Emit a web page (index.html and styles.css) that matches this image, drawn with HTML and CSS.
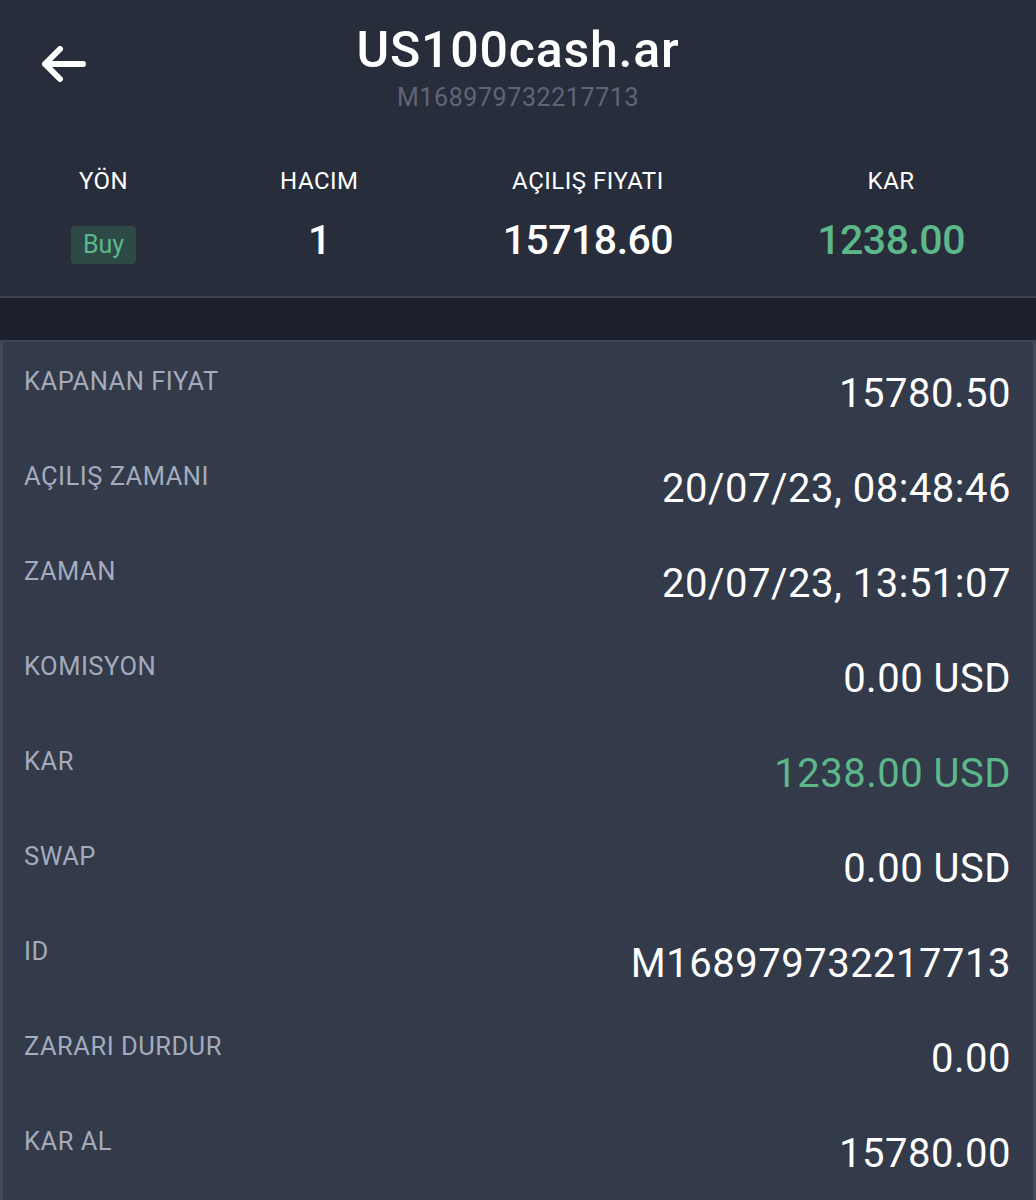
FILE: index.html
```html
<!DOCTYPE html>
<html lang="tr">
<head>
<meta charset="utf-8">
<link rel="stylesheet" href="styles.css">
</head>
<body>
<div class="app">
  <header class="header">
    <div class="topbar">
      <button class="back" aria-label="Geri">
        <svg width="48" height="40" viewBox="0 0 48 40"><path d="M5 18 H43 M20 3 L5 18 L20 33" fill="none" stroke="#ffffff" stroke-width="6" stroke-linecap="round" stroke-linejoin="round"/></svg>
      </button>
      <div class="titles">
        <div class="title">US100cash.ar</div>
        <div class="subtitle">M168979732217713</div>
      </div>
    </div>
    <div class="stats">
      <div class="stat">
        <div class="stat-label">YÖN</div>
        <div class="badge">Buy</div>
      </div>
      <div class="stat">
        <div class="stat-label">HACIM</div>
        <div class="stat-value">1</div>
      </div>
      <div class="stat">
        <div class="stat-label">AÇILIŞ FIYATI</div>
        <div class="stat-value">15718.60</div>
      </div>
      <div class="stat">
        <div class="stat-label">KAR</div>
        <div class="stat-value green">1238.00</div>
      </div>
    </div>
  </header>
  <div class="band"></div>
  <section class="panel">
    <div class="row"><div class="label">KAPANAN FIYAT</div><div class="value">15780.50</div></div>
    <div class="row"><div class="label">AÇILIŞ ZAMANI</div><div class="value">20/07/23, 08:48:46</div></div>
    <div class="row"><div class="label">ZAMAN</div><div class="value">20/07/23, 13:51:07</div></div>
    <div class="row"><div class="label">KOMISYON</div><div class="value">0.00 USD</div></div>
    <div class="row"><div class="label">KAR</div><div class="value green">1238.00 USD</div></div>
    <div class="row"><div class="label">SWAP</div><div class="value">0.00 USD</div></div>
    <div class="row"><div class="label">ID</div><div class="value">M168979732217713</div></div>
    <div class="row"><div class="label">ZARARI DURDUR</div><div class="value">0.00</div></div>
    <div class="row"><div class="label">KAR AL</div><div class="value">15780.00</div></div>
  </section>
</div>
</body>
</html>
```
FILE: styles.css
```css
* { box-sizing: border-box; }
html, body { margin: 0; padding: 0; }
body {
  background: #333a4a;
  font-family: Roboto, "Noto Sans", "DejaVu Sans", sans-serif;
  color: #ffffff;
  width: 1036px;
  height: 1200px;
  overflow: hidden;
}
.app { display: flex; flex-direction: column; height: 1200px; }

.header {
  background: #282d3b;
  height: 298px;
  border-bottom: 2px solid #3c4250;
  display: flex;
  flex-direction: column;
}
.topbar {
  position: relative;
  height: 140px;
  display: flex;
  justify-content: center;
}
.back {
  position: absolute;
  left: 40px;
  top: 46px;
  background: none;
  border: 0;
  padding: 0;
  width: 48px;
  height: 40px;
  display: flex;
}
.titles { display: flex; flex-direction: column; align-items: center; padding-top: 21px; }
.title {
  font-size: 50px;
  line-height: 58px;
  font-weight: 500;
  letter-spacing: 0.8px;
}
.subtitle {
  margin-top: 4px;
  font-size: 25px;
  line-height: 30px;
  color: #5e6577;
  letter-spacing: 0.6px;
}

.stats {
  display: flex;
  justify-content: space-between;
  padding: 26px 71px 0 71px;
}
.stat { display: flex; flex-direction: column; align-items: center; }
.stat-label {
  font-size: 24px;
  line-height: 30px;
  color: #ffffff;
  letter-spacing: 0.5px;
}
.stat-value {
  font-size: 41px;
  line-height: 50px;
  font-weight: 500;
  margin-top: 19px;
  letter-spacing: -0.5px;
}
.badge {
  margin-top: 30px;
  width: 65px;
  height: 38px;
  border-radius: 4px;
  background: #2e4a47;
  color: #5cb88a;
  font-size: 25px;
  line-height: 38px;
  text-align: center;
}
.green { color: #5cb88a; }

.band {
  height: 44px;
  background: #1c202c;
  border-bottom: 2px solid #3e4556;
}

.panel {
  flex: 1;
  background: #333a4a;
  border-left: 3px solid #434a5b;
  border-right: 3px solid #434a5b;
  display: flex;
  flex-direction: column;
}
.row {
  height: 95px;
  display: flex;
  justify-content: space-between;
  align-items: flex-start;
  padding: 0 22px 0 21px;
}
.label {
  margin-top: 24px;
  font-size: 25.5px;
  line-height: 30px;
  color: #a3abbc;
  letter-spacing: 0.5px;
}
.value {
  margin-top: 28px;
  font-size: 40px;
  line-height: 48px;
  color: #ffffff;
  letter-spacing: 0.5px;
}
.value.green { color: #5cb88a; }
```
